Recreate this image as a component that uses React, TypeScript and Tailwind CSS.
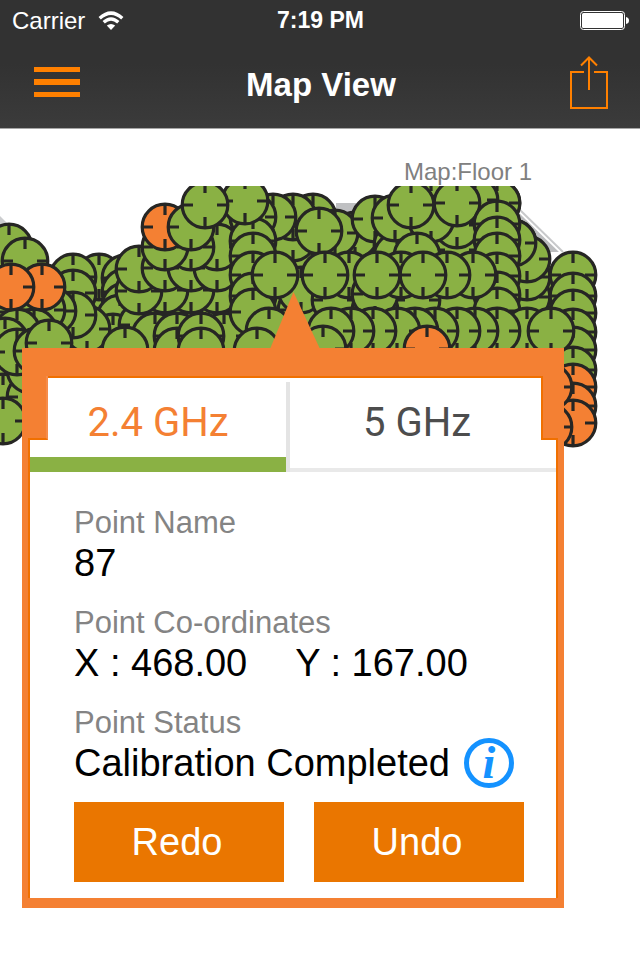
import React from "react";

type Point = [number, number, ("g" | "o")?];

// Survey points in drawing order: later points cover earlier ones.
const points: Point[] = [
  [9, 247], [3, 312], [20, 312], [30, 300], [53, 311], [20, 330], [3, 350],
  [3, 375], [3, 397], [30, 397], [30, 370], [3, 421],
  [25, 261],
  [99, 277], [125, 278], [125, 292], [125, 306], [120, 318], [73, 277], [73, 293], [113, 337], [87, 329], [73, 315], [53, 311],
  [42, 310], [34, 332], [17, 332], [5, 341], [17, 352], [37, 351], [49, 343],
  [42, 287, "o"], [11, 287, "o"],
  [142, 325], [224, 320], [224, 307], [228, 293], [232, 277], [232, 261], [232, 243], [227, 225],
  [217, 290], [191, 290], [165, 290], [139, 291],
  [139, 269], [165, 268], [191, 268], [217, 268],
  [217, 247], [191, 247], [165, 247],
  [155, 336], [177, 336], [177, 351], [224, 336], [201, 336], [201, 351], [125, 350],
  [301, 310], [301, 290], [293, 238], [313, 217], [293, 217], [253, 217], [273, 217],
  [253, 217], [253, 241], [253, 256], [253, 275], [253, 296], [253, 312],
  [165, 227, "o"], [191, 227], [245, 201], [205, 205],
  [335, 256], [335, 300], [355, 256], [355, 235], [335, 233], [319, 231],
  [375, 219], [397, 245], [397, 256], [397, 290], [395, 218],
  [475, 203], [497, 203], [513, 243], [527, 331], [527, 315], [527, 297], [527, 277], [527, 259], [513, 243],
  [497, 203], [475, 215], [475, 295],
  [457, 315], [457, 295], [457, 250], [457, 225], [431, 203], [431, 219], [475, 200], [457, 203],
  [497, 224], [497, 240], [497, 256], [497, 276], [497, 295], [497, 311],
  [417, 300], [417, 256], [411, 205],
  [349, 275], [375, 310], [375, 294], [401, 275], [473, 275], [447, 275], [423, 275],
  [377, 275], [325, 275], [275, 275],
  [527, 331], [497, 331], [475, 331], [457, 331], [435, 331], [415, 331], [397, 331], [373, 331], [351, 331], [331, 331],
  [323, 349], [269, 331], [257, 351], [427, 349, "o"],
  [573, 275], [573, 296], [573, 313], [573, 332], [573, 350], [573, 370],
  [573, 387, "o"], [573, 406, "o"], [573, 423, "o"], [549, 387, "o"], [549, 427, "o"], [551, 331],
];

function FloorMap() {
  return (
    <svg className="absolute top-0 left-0" width="640" height="274" viewBox="0 186 640 274" aria-label="Floor map">
      <path d="M0 216L10 226H0Z" fill="#cccdcf" />
      <path d="M336 203H356V216H336Z" fill="#bfc0c2" />
      <path d="M518 211L560 252H535L518 232Z" fill="#bcbdbf" />
      <path d="M520 210L563 252" stroke="#c8c9cb" strokeWidth="2" />
      <path d="M518 211L560 252" stroke="#fff" strokeWidth="1.5" />
      <path d="M0 290L125 290L140 260L260 230H500L530 270L560 290V350H0Z" fill="#8ab144" />
      {points.map(([x, y, kind], i) => (
        <g key={i} transform={`translate(${x} ${y})`} stroke="#262624" strokeWidth="3.2">
          <circle r="22.8" fill={kind === "o" ? "#f48033" : "#8ab144"} />
          <path d="M0-22V-12M0 22V12M-22 0H-12M22 0H12" />
        </g>
      ))}
    </svg>
  );
}

function Field({ label, children }: { label: string; children: React.ReactNode }) {
  return (
    <div className="mb-5">
      <dt className="text-[31px] leading-9 text-[#848484]">{label}</dt>
      <dd className="flex h-11 items-center whitespace-nowrap text-[38px] leading-[44px] text-black">{children}</dd>
    </div>
  );
}

function StatusBar() {
  return (
    <div className="grid h-[41px] grid-cols-3 items-center pl-3 pr-[11px] text-[24px] leading-[41px]">
      <div className="flex items-center gap-[13px]">
        <span>Carrier</span>
        <svg width="26" height="20" viewBox="0 0 26 20" fill="none" stroke="#fff" strokeWidth="3.4" aria-label="Wi-Fi">
          <path d="M1.7 7.2Q13-3 24.3 7.2" />
          <path d="M5.7 11.3Q13 4.7 20.3 11.3" />
          <path d="M13 19L8.8 14.6Q13 11.2 17.2 14.6Z" fill="#fff" stroke="none" />
        </svg>
      </div>
      <span className="text-center text-[23px] font-bold">7:19 PM</span>
      <svg className="justify-self-end" width="49" height="19" viewBox="0 0 49 19" aria-label="Battery full">
        <rect x="0.5" y="0.5" width="44" height="18" rx="3" fill="none" stroke="#fff" />
        <rect x="2" y="2" width="41" height="15" rx="1.5" fill="#fff" />
        <path d="M46 6Q49 6.5 49 9.5Q49 12.500 46 13Z" fill="#fff" />
      </svg>
    </div>
  );
}

export default function App() {
  return (
    <div className="min-h-screen bg-white font-['Liberation_Sans',Arial,sans-serif]">
      <header className="border-b border-[#a5a5a5] bg-linear-to-b from-[#323232] from-50% to-[#3b3b3b] text-white">
        <StatusBar />
        <div className="grid h-[87px] grid-cols-[1fr_auto_1fr] items-center pl-[34px] pr-8">
          <button aria-label="Menu" className="flex w-[46px] flex-col gap-[7px] pb-[5px]">
            <span className="h-[5px] w-full bg-[#ff8000]" />
            <span className="h-[6px] w-full bg-[#ff8000]" />
            <span className="h-[5px] w-full bg-[#ff8000]" />
          </button>
          <h1 className="text-[33px] leading-[44px] font-bold">Map View</h1>
          <button aria-label="Share" className="justify-self-end pb-[5px]">
            <svg className="block" width="38" height="53" viewBox="0 0 38 53" fill="none" stroke="#ff8000" strokeWidth="2">
              <path d="M14 16H1V52H37V16H24M19 34V1.500M11 9.500L19 1.500L27 9.500" />
            </svg>
          </button>
        </div>
      </header>

      <main>
        <p className="pt-[29px] pr-[108px] text-right text-[24px] leading-7 text-[#808080]">Map:Floor 1</p>
        <div className="relative pt-[162px]">
          <FloorMap />
          <section className="relative mr-[76px] ml-[22px] border-x-[6px] border-t-[28px] border-b-[10px] border-[#f48033]">
            <svg className="absolute -top-[84px] left-[242px]" width="50" height="57" viewBox="0 0 50 57" aria-hidden="true">
              <path d="M0 57L23.500 0L50 57Z" fill="#f48033" />
            </svg>
            <div className="border-x-2 border-t-2 border-[#f07000]">
              <div role="tablist" className="relative flex h-[94px] bg-white font-[Roboto,sans-serif] text-[40px] leading-[56px]">
                <span className="absolute -top-0.5 -left-0.5 h-16 w-5 border-r-2 border-b-2 border-[#f68c4a] border-b-[#f07000] bg-[#f48033]" />
                <span className="absolute -top-0.5 -right-0.5 h-16 w-[17px] border-b-2 border-l-2 border-[#f07000] bg-[#f48033]" />
                <button role="tab" aria-selected="true" className="w-[256px] border-b-[15px] border-[#8ab144] pt-[10px] text-[#f48033]">
                  2.4 GHz
                </button>
                <span className="mt-1 w-1 bg-[#e4e4e4]" />
                <button role="tab" aria-selected="false" className="flex-1 border-b-4 border-[#e9e9e9] pt-[10px] pr-3 pb-[11px] text-[#4d4d4d]">
                  5 GHz
                </button>
              </div>
              <div className="bg-white pt-[33px] pr-8 pb-4 pl-11">
                <dl>
                  <Field label="Point Name">87</Field>
                  <Field label="Point Co-ordinates">
                    <span>X : 468.00</span>
                    <span className="ml-12">Y : 167.00</span>
                  </Field>
                  <Field label="Point Status">
                    <span>Calibration Completed</span>
                    <button
                      aria-label="Status information"
                      className="ml-3.5 flex size-[50px] shrink-0 items-center justify-center rounded-full border-[5px] border-[#1492ff] font-['Liberation_Serif',serif] text-[46px] leading-10 font-bold text-[#1492ff] italic"
                    >
                      i
                    </button>
                  </Field>
                </dl>
                <div className="-mt-[3px] grid grid-cols-2 gap-[30px] text-[38px] text-white">
                  <button className="h-20 bg-[#ea7600] pr-1">Redo</button>
                  <button className="h-20 bg-[#ea7600] pr-1">Undo</button>
                </div>
              </div>
            </div>
          </section>
        </div>
      </main>
    </div>
  );
}
